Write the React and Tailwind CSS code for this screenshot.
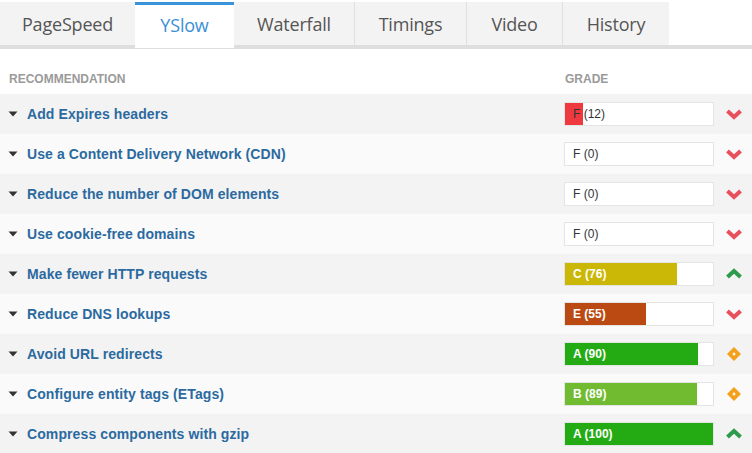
const tabs = [
  { label: 'PageSpeed', w: 'w-[135px]' },
  { label: 'YSlow', w: 'w-[99px]', active: true },
  { label: 'Waterfall', w: 'w-[121px]' },
  { label: 'Timings', w: 'w-[112px]' },
  { label: 'Video', w: 'w-[96px]' },
  { label: 'History', w: 'w-[106px]' },
];

const rows = [
  { name: 'Add Expires headers', grade: 'F', score: 12, color: '#ee3a3f', trend: 'down' },
  { name: 'Use a Content Delivery Network (CDN)', grade: 'F', score: 0, color: '#ee3a3f', trend: 'down' },
  { name: 'Reduce the number of DOM elements', grade: 'F', score: 0, color: '#ee3a3f', trend: 'down' },
  { name: 'Use cookie-free domains', grade: 'F', score: 0, color: '#ee3a3f', trend: 'down' },
  { name: 'Make fewer HTTP requests', grade: 'C', score: 76, color: '#cbb705', trend: 'up' },
  { name: 'Reduce DNS lookups', grade: 'E', score: 55, color: '#ba4a12', trend: 'down' },
  { name: 'Avoid URL redirects', grade: 'A', score: 90, color: '#24ab14', trend: 'same' },
  { name: 'Configure entity tags (ETags)', grade: 'B', score: 89, color: '#70bb30', trend: 'same' },
  { name: 'Compress components with gzip', grade: 'A', score: 100, color: '#24ab14', trend: 'up' },
];

function TrendIcon({ trend }) {
  if (trend === 'down') {
    return (
      <svg width="18" height="14" viewBox="0 0 18 14">
        <path d="M2.5 4 L9 10 L15.5 4" fill="none" stroke="#ea4f5c" strokeWidth="4" strokeLinejoin="miter" />
      </svg>
    );
  }
  if (trend === 'up') {
    return (
      <svg width="18" height="14" viewBox="0 0 18 14">
        <path d="M2.5 10 L9 4 L15.5 10" fill="none" stroke="#2e9a4c" strokeWidth="4" strokeLinejoin="miter" />
      </svg>
    );
  }
  return (
    <svg width="16" height="16" viewBox="0 0 16 16">
      <path d="M8 1 L15 8 L8 15 L1 8 Z" fill="#f5a01c" />
      <path d="M8 6.3 L9.7 8 L8 9.7 L6.3 8 Z" fill="#fff" />
    </svg>
  );
}

function Grade({ grade, score, color }) {
  const bold = score > 20;
  return (
    <div className="relative w-[150px] h-[24px] border border-[#e4e4e4] bg-white">
      <div className="absolute left-0 top-0 bottom-0" style={{ width: `${score}%`, background: color }} />
      <div
        className={`relative h-full flex items-center pl-2 text-[12px] ${
          bold ? 'font-bold text-white' : 'text-[#333]'
        }`}
      >
        {grade} ({score})
      </div>
    </div>
  );
}

export default function App() {
  return (
    <div className="w-[752px] h-[453px] overflow-hidden bg-white font-['Liberation_Sans',Arial,sans-serif]">
      <div className="pt-[2px] relative">
        <div className="flex h-[43px]">
          {tabs.map((t, i) => (
            <div
              key={t.label}
              className={`${t.w} flex items-center justify-center text-[18px] tracking-[-0.2px] font-['Open_Sans',sans-serif] ${
                t.active
                  ? 'bg-white text-[#3a8fd6] border-t-[3px] border-[#3a93d8] h-[46px] relative z-10'
                  : `bg-[#f3f3f3] text-[#555] ${i < tabs.length - 1 && !tabs[i + 1].active ? 'border-r border-[#e0e0e0]' : ''}`
              }`}
            >
              <span className={t.active ? '-mt-[2px]' : 'mt-[1px]'}>{t.label}</span>
            </div>
          ))}
        </div>
        <div className="h-[4px] bg-[#dedede]" />
      </div>

      <div className="flex items-center h-[45px] pt-[14px] text-[12px] font-bold text-[#9a9a9a] uppercase">
        <div className="pl-[9px] w-[564px]">Recommendation</div>
        <div className="pl-[1px]">Grade</div>
      </div>

      <div>
        {rows.map((r, i) => (
          <div
            key={r.name}
            className={`flex items-center h-[40px] ${i % 2 === 0 ? 'bg-[#f3f3f3]' : 'bg-[#fafafa]'}`}
          >
            <div className="w-[564px] flex items-center">
              <svg width="10" height="6" viewBox="0 0 10 6" className="ml-[8px] mr-[9px]">
                <path d="M0.5 0.5 L9.5 0.5 L5 5.5 Z" fill="#333" />
              </svg>
              <span className="text-[14px] tracking-[0.1px] font-bold text-[#2b6aa0]">{r.name}</span>
            </div>
            <Grade grade={r.grade} score={r.score} color={r.color} />
            <div className="flex-1 flex items-center justify-center pl-[2px]">
              <TrendIcon trend={r.trend} />
            </div>
          </div>
        ))}
      </div>
    </div>
  );
}
